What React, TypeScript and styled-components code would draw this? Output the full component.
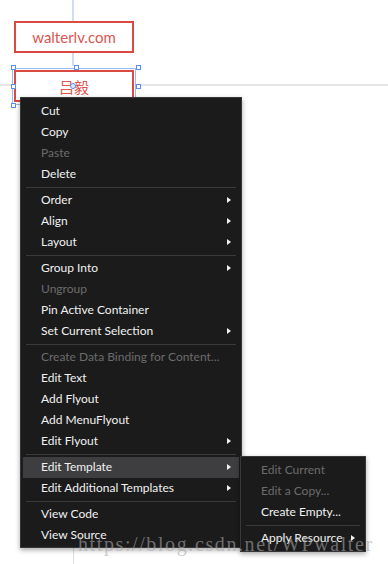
import React from "react";
import styled, { createGlobalStyle } from "styled-components";

type Entry = { label: string; disabled?: boolean; sub?: boolean; active?: boolean } | "sep";

const mainItems: Entry[] = [
  { label: "Cut" },
  { label: "Copy" },
  { label: "Paste", disabled: true },
  { label: "Delete" },
  "sep",
  { label: "Order", sub: true },
  { label: "Align", sub: true },
  { label: "Layout", sub: true },
  "sep",
  { label: "Group Into", sub: true },
  { label: "Ungroup", disabled: true },
  { label: "Pin Active Container" },
  { label: "Set Current Selection", sub: true },
  "sep",
  { label: "Create Data Binding for Content...", disabled: true },
  { label: "Edit Text" },
  { label: "Add Flyout" },
  { label: "Add MenuFlyout" },
  { label: "Edit Flyout", sub: true },
  "sep",
  { label: "Edit Template", sub: true, active: true },
  { label: "Edit Additional Templates", sub: true },
  "sep",
  { label: "View Code" },
  { label: "View Source" },
];

const templateItems: Entry[] = [
  { label: "Edit Current", disabled: true },
  { label: "Edit a Copy...", disabled: true },
  { label: "Create Empty..." },
  "sep",
  { label: "Apply Resource", sub: true },
];

const MenuList = ({ items }: { items: Entry[] }) => (
  <>
    {items.map((it, i) =>
      it === "sep" ? (
        <Separator key={i} />
      ) : (
        <Item key={i} $disabled={it.disabled} $active={it.active}>
          {it.label}
          {it.sub && <Arrow />}
          {it.active && (
            <SubMenu>
              <MenuList items={templateItems} />
            </SubMenu>
          )}
        </Item>
      )
    )}
  </>
);

const App = () => {
  return (
    <>
      <GlobalStyle />
      <Page>
        <HGuide />
        <VGuide />
        <VGuideLower />
        <Stage>
          <DesignBox>walterlv.com</DesignBox>
          <Selected>
            <DesignBox>吕毅</DesignBox>
            <SelectionFrame />
            <Handle $x={0} $y={0} />
            <Handle $x={50} $y={0} />
            <Handle $x={100} $y={0} />
            <Handle $x={0} $y={50} />
            <Handle $x={100} $y={50} />
            <Handle $x={0} $y={100} />
            <Handle $x={50} $y={100} />
            <Handle $x={100} $y={100} />
            <CenterDot />
          </Selected>
        </Stage>
        <Menu>
          <MenuList items={mainItems} />
        </Menu>
        <Watermark>https://blog.csdn.net/WPwalter</Watermark>
      </Page>
    </>
  );
};

const GlobalStyle = createGlobalStyle`
  html, body {
    margin: 0;
    padding: 0;
    background: #ffffff;
  }
`;

const Page = styled.div`
  position: relative;
  width: 388px;
  height: 564px;
  overflow: hidden;
  background: #ffffff;
  font-family: Lato, "Liberation Sans", sans-serif;
`;

const HGuide = styled.div`
  position: absolute;
  left: 0;
  right: 0;
  top: 84px;
  height: 2px;
  background: #e6e6e6;
`;

const VGuide = styled.div`
  position: absolute;
  left: 72px;
  top: 0;
  width: 2px;
  height: 66px;
  background: #cfdcf6;
`;

const VGuideLower = styled.div`
  position: absolute;
  left: 73px;
  top: 540px;
  bottom: 0;
  width: 1px;
  background: #dedede;
`;

const Stage = styled.div`
  position: relative;
  display: flex;
  flex-direction: column;
  gap: 17px;
  padding: 21px 0 0 14px;
`;

const DesignBox = styled.div`
  position: relative;
  box-sizing: border-box;
  width: 120px;
  height: 32px;
  border: 2px solid #da4a42;
  background: #ffffff;
  color: #dd5550;
  font-family: Lato, "Noto Sans CJK SC", sans-serif;
  font-size: 15px;
  display: flex;
  align-items: center;
  justify-content: center;
`;

const Selected = styled.div`
  position: relative;
  width: 120px;
`;

const SelectionFrame = styled.div`
  position: absolute;
  left: -2px;
  top: -2px;
  right: -2px;
  bottom: -3px;
  border: 1px solid #9dbaf2;
  pointer-events: none;
`;

const Handle = styled.div<{ $x: number; $y: number }>`
  position: absolute;
  box-sizing: border-box;
  width: 5px;
  height: 5px;
  border: 1px solid #5b8ef0;
  background: #ffffff;
  left: calc(-3px + ${(p) => p.$x} * (100% + 5px) / 100);
  top: calc(-5px + ${(p) => p.$y} * 38px / 100);
`;

const CenterDot = styled.div`
  position: absolute;
  box-sizing: border-box;
  width: 6px;
  height: 6px;
  border-radius: 50%;
  border: 1px solid #5b8ef0;
  background: #dfe9fc;
  left: 56px;
  top: 13px;
`;

const Menu = styled.div`
  position: absolute;
  left: 20px;
  top: 97px;
  width: 222px;
  box-sizing: border-box;
  padding: 3px 2px 1px;
  background: #1b1b1c;
  border: 1px solid #38383b;
  box-shadow: 0 2px 5px rgba(0, 0, 0, 0.35);
  z-index: 2;
`;

const Item = styled.div<{ $disabled?: boolean; $active?: boolean }>`
  position: relative;
  height: 21px;
  line-height: 20px;
  padding-left: 18px;
  font-size: 12px;
  color: ${(p) => (p.$disabled ? "#6b6b6b" : "#f1f1f1")};
  background: ${(p) => (p.$active ? "#3e3e40" : "transparent")};
  white-space: nowrap;
`;

const Arrow = styled.span`
  position: absolute;
  right: 8px;
  top: 7px;
  width: 0;
  height: 0;
  border-style: solid;
  border-width: 3.5px 0 3.5px 4px;
  border-color: transparent transparent transparent #f1f1f1;
`;

const Separator = styled.div`
  height: 5px;
  display: flex;
  align-items: center;
  padding: 0 3px;
  &::after {
    content: "";
    flex: 1;
    height: 1px;
    background: #3a3a3d;
  }
`;

const SubMenu = styled.div`
  position: absolute;
  left: 217px;
  top: -1px;
  width: 126px;
  box-sizing: border-box;
  padding: 3px 2px 2px;
  background: #1b1b1c;
  border: 1px solid #38383b;
  box-shadow: 0 2px 5px rgba(0, 0, 0, 0.35);
  z-index: 3;
`;

const Watermark = styled.div`
  position: absolute;
  left: 78px;
  top: 534px;
  font-family: "Liberation Serif", serif;
  font-size: 20px;
  line-height: 20px;
  letter-spacing: 1.6px;
  color: rgba(167, 167, 167, 0.6);
  white-space: nowrap;
  pointer-events: none;
  z-index: 5;
`;

export default App;
